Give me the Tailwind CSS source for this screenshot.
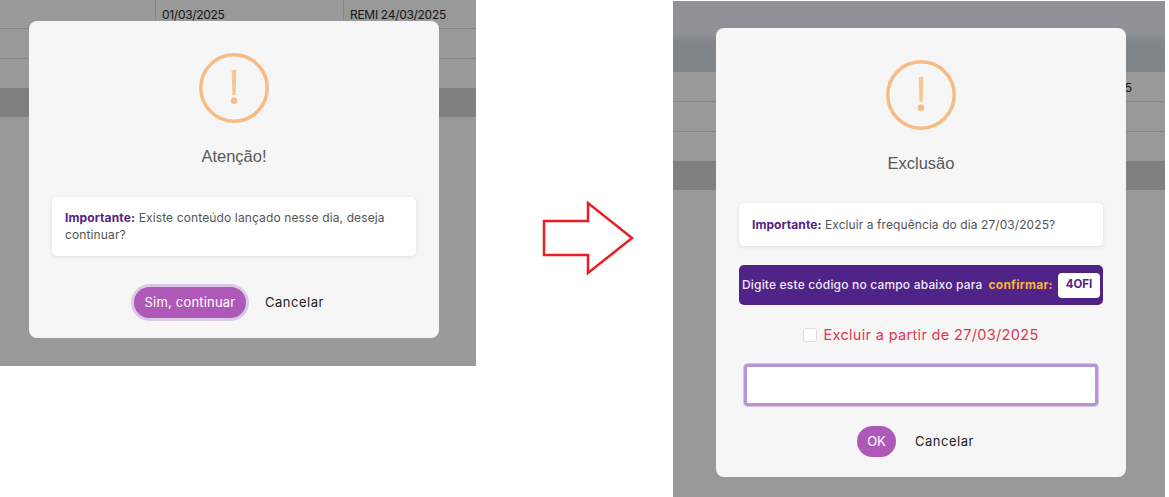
<!DOCTYPE html>
<html lang="en">
<head>
  <meta charset="UTF-8">
  <meta name="viewport" content="width=device-width, initial-scale=1.0">
  <title>Atenção / Exclusão</title>
  <script src="https://cdn.jsdelivr.net/npm/@tailwindcss/browser@4"></script>
</head>
<body class="bg-white font-['Inter',sans-serif] w-[1169px] h-[497px] overflow-hidden">
  <div class="flex items-start">

    <!-- Left screenshot -->
    <div class="relative w-[476px] h-[366px] bg-[#999999] overflow-hidden">
      <div class="flex h-[29px] border-b border-[#868686] text-[12px] text-[#151515]">
        <div class="w-[156px] border-r border-[#868686]"></div>
        <div class="w-[188px] border-r border-[#868686] pl-[6px] pt-[6px] tracking-[-0.3px]">01/03/2025</div>
        <div class="pl-[6px] pt-[6px] tracking-[-0.3px]">REMI 24/03/2025</div>
      </div>
      <div class="h-[30px] border-b border-[#868686]"></div>
      <div class="h-[29px]"></div>
      <div class="h-[29px] bg-[#808080]"></div>

      <div class="absolute left-[29px] top-[21px] w-[410px] h-[317px] bg-[#f6f6f6] rounded-[8px] flex flex-col items-center pt-[32px]">
        <svg class="w-[70px] h-[70px]" viewBox="0 0 70 70" fill="none">
          <circle cx="35" cy="35" r="33.2" stroke="#f8bb86" stroke-width="3.5"/>
          <path d="M32.6 17H37.4L36.5 42H33.5Z" fill="#f8c595"/>
          <circle cx="35" cy="47.8" r="3.2" fill="#f8bb86"/>
        </svg>
        <h2 class="mt-[21px] h-[24px] leading-[24px] text-[16.5px] text-[#595959] font-['Liberation_Sans',sans-serif]">Atenção!</h2>
        <div class="mt-[29px] w-[364px] h-[59px] bg-white rounded-[5px] shadow-[0_1px_4px_rgba(0,0,0,0.1)] px-[13px] pt-[12px] text-[12px] leading-[17px] text-[#545454] tracking-[0.13px]">
          <b class="font-bold text-[#4f2387]">Importante:</b> Existe conteúdo lançado nesse dia, deseja continuar?
        </div>
        <div class="mt-[31px] pr-[10px] flex items-center">
          <button class="h-[31px] w-[112px] rounded-full bg-[#ae59b7] text-white text-[13px] tracking-[0.2px] ring-[3px] ring-[#d9c8e8]">Sim, continuar</button>
          <button class="ml-[19px] w-[59px] text-[13px] text-[#222222] tracking-[0.5px]">Cancelar</button>
        </div>
      </div>
    </div>

    <!-- Arrow between the two -->
    <svg class="w-[197px] h-[497px] shrink-0" viewBox="0 0 197 497" fill="none">
      <path d="M68 221H112V203L156 238L112 273V255H68Z" stroke="#ed1c24" stroke-width="2.5"/>
    </svg>

    <!-- Right screenshot -->
    <div class="relative w-[492px] h-[497px] bg-[#999999] overflow-hidden">
      <div class="h-[1px] bg-white"></div>
      <div class="h-[71px] bg-[linear-gradient(#8f9297_0,#8e9196_33px,#7f8588_41px,#7f8588_71px)]"></div>
      <div class="h-[30px] border-b border-[#868686] flex justify-end pr-[33px] pt-[7px] text-[12px] text-[#151515]">5</div>
      <div class="h-[30px] border-b border-[#868686]"></div>
      <div class="h-[29px]"></div>
      <div class="h-[29px] bg-[#808080]"></div>

      <div class="absolute left-[43px] top-[28px] w-[410px] h-[449px] bg-[#f6f6f6] rounded-[8px] flex flex-col items-center pt-[32px]">
        <svg class="w-[70px] h-[70px]" viewBox="0 0 70 70" fill="none">
          <circle cx="35" cy="35" r="33.2" stroke="#f8bb86" stroke-width="3.5"/>
          <path d="M32.6 17H37.4L36.5 42H33.5Z" fill="#f8c595"/>
          <circle cx="35" cy="47.8" r="3.2" fill="#f8bb86"/>
        </svg>
        <h2 class="mt-[21px] h-[24px] leading-[24px] text-[16.5px] text-[#595959] font-['Liberation_Sans',sans-serif]">Exclusão</h2>
        <div class="mt-[28px] w-[364px] h-[43px] bg-white rounded-[5px] shadow-[0_1px_4px_rgba(0,0,0,0.1)] px-[13px] flex items-center text-[12px] text-[#545454] tracking-[0.08px]">
          <span><b class="font-bold text-[#4f2387]">Importante:</b> Excluir a frequência do dia 27/03/2025?</span>
        </div>
        <div class="mt-[19px] w-[364px] h-[40px] bg-[#4f2387] rounded-[5px] flex items-center pl-[3px] pr-[3px] text-[12px] font-medium text-[#f0eaf7]">
          <span class="tracking-[0.18px]">Digite este código no campo abaixo para</span>
          <b class="ml-[6px] font-bold text-[#f6b73c] tracking-[0.25px]">confirmar:</b>
          <span class="ml-auto w-[42px] h-[25px] bg-white rounded-[4px] flex items-center justify-center text-[11.5px] font-bold text-[#4f2387]">4OFI</span>
        </div>
        <label class="mt-[22px] flex items-center h-[16px] text-[14.5px] text-[#e0364f] tracking-[0.33px]">
          <span class="w-[14px] h-[14px] bg-white border border-[#dddddd] rounded-[3px] mr-[6px]"></span>
          Excluir a partir de 27/03/2025
        </label>
        <input type="text" class="mt-[21px] w-[354px] h-[42px] bg-white border-[3px] border-[#b794d6] rounded-[4px] outline-none ring-1 ring-[#d5c3e6]">
        <div class="mt-[20px] pr-[11px] flex items-center">
          <button class="h-[31px] w-[39px] rounded-full bg-[#ae59b7] text-white text-[13px]">OK</button>
          <button class="ml-[19px] w-[59px] text-[13px] text-[#222222] tracking-[0.5px]">Cancelar</button>
        </div>
      </div>
    </div>

  </div>
</body>
</html>
